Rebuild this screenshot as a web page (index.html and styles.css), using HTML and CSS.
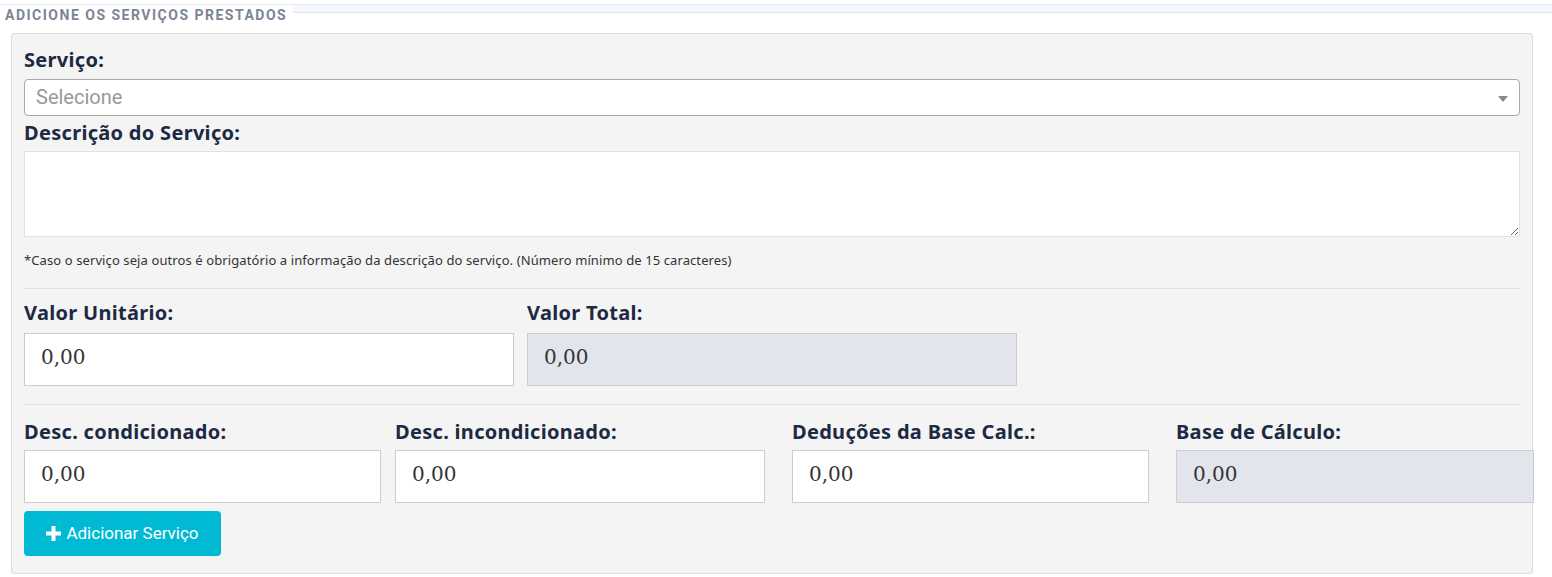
FILE: index.html
```html
<!DOCTYPE html>
<html lang="pt">
<head>
<meta charset="utf-8">
<link rel="stylesheet" href="styles.css">
</head>
<body>
<div class="section-head">
  <span class="legend">ADICIONE OS SERVIÇOS PRESTADOS</span>
  <span class="band"></span>
</div>
<div class="panel">
  <label class="lbl">Serviço:</label>
  <div class="select">
    <span class="placeholder">Selecione</span>
    <span class="caret"></span>
  </div>
  <label class="lbl lbl-desc">Descrição do Serviço:</label>
  <textarea class="textarea"></textarea>
  <p class="note">*Caso o serviço seja outros é obrigatório a informação da descrição do serviço. (Número mínimo de 15 caracteres)</p>
  <hr class="sep sep-1">
  <div class="row row-2">
    <div class="field">
      <label class="lbl">Valor Unitário:</label>
      <div class="input">0,00</div>
    </div>
    <div class="field">
      <label class="lbl">Valor Total:</label>
      <div class="input readonly">0,00</div>
    </div>
  </div>
  <hr class="sep sep-2">
  <div class="row row-4">
    <div class="field f1">
      <label class="lbl">Desc. condicionado:</label>
      <div class="input">0,00</div>
    </div>
    <div class="field f2">
      <label class="lbl">Desc. incondicionado:</label>
      <div class="input">0,00</div>
    </div>
    <div class="field f3">
      <label class="lbl">Deduções da Base Calc.:</label>
      <div class="input">0,00</div>
    </div>
    <div class="field f4">
      <label class="lbl">Base de Cálculo:</label>
      <div class="input readonly">0,00</div>
    </div>
  </div>
  <button class="btn"><svg class="plus" viewBox="0 0 15 15" width="15" height="15"><path d="M5.5 0h4v5.5H15v4H9.5V15h-4V9.5H0v-4h5.5z" fill="#fff"/></svg>Adicionar Serviço</button>
</div>
</body>
</html>
```

FILE: styles.css
```css
* { box-sizing: border-box; }
html, body { margin: 0; padding: 0; background: #fff; }
body { font-family: "Noto Sans", "Liberation Sans", sans-serif; }

.section-head {
  display: flex;
  align-items: flex-start;
  border-top: 1px solid #e6e9ef;
  margin-top: 4px;
  height: 29px;
}
.legend {
  font-family: Roboto, "Liberation Sans", sans-serif;
  font-weight: 700;
  font-size: 14px;
  letter-spacing: 1.5px;
  color: #7b8594;
  padding-left: 5px;
  padding-right: 6px;
  line-height: 20px;
  background: #fff;
}
.band {
  flex: 1;
  height: 8px;
  background: #f4f7fd;
  border-bottom: 1px solid #dfe4ec;
}

.panel {
  margin-left: 11px;
  width: 1522px;
  background: #f4f4f4;
  border: 1px solid #dcdcdc;
  border-radius: 3px;
  padding: 13px 12px 17px 12px;
  display: flex;
  flex-direction: column;
  align-items: flex-start;
}

.lbl {
  display: block;
  font-family: "Noto Sans", sans-serif;
  font-weight: 700;
  font-size: 20px;
  letter-spacing: 0.3px;
  line-height: 26px;
  color: #1d2a43;
  margin-bottom: 6px;
  white-space: nowrap;
}
.lbl-desc { margin-top: 4px; margin-bottom: 5px; }

.select {
  width: 1496px;
  height: 37px;
  background: #fff;
  border: 1px solid #aaa;
  border-radius: 4px;
  display: flex;
  align-items: center;
  justify-content: space-between;
  padding: 0 11px 0 11px;
}
.placeholder {
  font-family: Roboto, "Liberation Sans", sans-serif;
  font-size: 20px;
  color: #999;
  margin-top: -2px;
}
.caret {
  width: 0; height: 0;
  border-left: 5px solid transparent;
  border-right: 5px solid transparent;
  border-top: 6px solid #888;
  margin-top: 2px;
}

.textarea {
  display: block;
  width: 1496px;
  height: 86px;
  background: #fff;
  border: 1px solid #e2e2e2;
  border-radius: 0;
  margin: 0;
  resize: both;
  outline: none;
}

.note {
  margin: 15px 0 0 0;
  font-family: "Noto Sans", sans-serif;
  font-size: 13px;
  letter-spacing: 0.1px;
  line-height: 16px;
  color: #333;
}

.sep {
  width: 1496px;
  border: 0;
  border-top: 1px solid #dde1e8;
  margin: 0;
}
.sep-1 { margin-top: 20px; }
.sep-2 { margin-top: 18px; }

.row { display: flex; }
.row-2 { margin-top: 11px; gap: 13px; }
.row-2 .field { width: 490px; }
.row-2 .lbl { margin-bottom: 7px; }
.row-4 { margin-top: 14px; }
.row-4 .lbl { margin-bottom: 5px; }
.f1 { width: 371px; }
.f1 .input { width: 357px; }
.f2 { width: 397px; }
.f2 .input { width: 370px; }
.f3 { width: 384px; }
.f3 .input { width: 357px; }
.f4 { width: 358px; }
.f4 .input { width: 358px; }

.input {
  height: 53px;
  background: #fff;
  border: 1px solid #ccc;
  padding-left: 16px;
  padding-bottom: 5px;
  display: flex;
  align-items: center;
  font-family: "DejaVu Serif", serif;
  font-size: 20px;
  color: #333;
}
.input.readonly { background: #e2e5ec; }

.btn {
  margin-top: 8px;
  height: 45px;
  width: 197px;
  border: 0;
  border-radius: 4px;
  background: #00bad4;
  color: #fff;
  font-family: Roboto, "Liberation Sans", sans-serif;
  font-size: 17px;
  display: flex;
  align-items: center;
  justify-content: center;
  gap: 5px;
  padding: 0 0 1px 0;
}
.plus { display: block; }
```
